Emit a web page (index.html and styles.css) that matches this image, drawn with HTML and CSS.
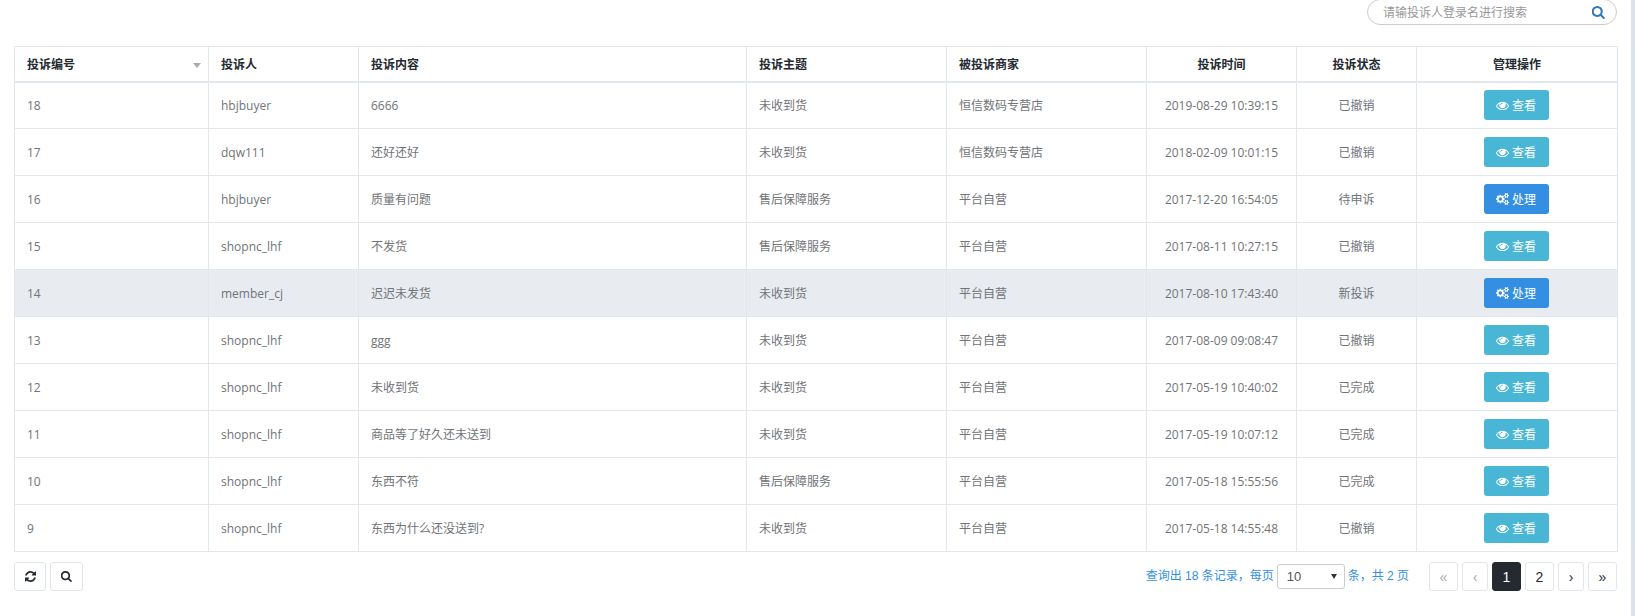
FILE: index.html
```html
<!DOCTYPE html>
<html lang="zh-CN">
<head>
<meta charset="utf-8">
<title>投诉管理</title>
<link rel="stylesheet" href="styles.css">
</head>
<body>
<svg class="defs" width="0" height="0" aria-hidden="true">
  <symbol id="i-eye" viewBox="0 300 1792 1192"><path fill="currentColor" d="M1664 960q-152-236-381-353 61 104 61 225 0 185-131.500 316.500t-316.500 131.500-316.500-131.500-131.500-316.500q0-121 61-225-229 117-381 353 133 205 333.500 326.500t434.500 121.500 434.500-121.500 333.500-326.500zm-720-384q0-20-14-34t-34-14q-125 0-214.500 89.500t-89.500 214.500q0 20 14 34t34 14 34-14 14-34q0-86 61-147t147-61q20 0 34-14t14-34zm848 384q0 34-20 69-140 230-376.500 368.500t-499.500 138.500-499.500-139-376.500-368q-20-35-20-69t20-69q140-229 376.500-368t499.500-139 499.500 139 376.500 368q20 35 20 69z"/></symbol>
  <symbol id="i-cogs" viewBox="0 0 1920 1792"><path fill="currentColor" d="M896 896q0-106-75-181t-181-75-181 75-75 181 75 181 181 75 181-75 75-181zm768 512q0-52-38-90t-90-38-90 38-38 90q0 53 37.500 90.500t90.500 37.500 90.500-37.500 37.500-90.500zm0-1024q0-52-38-90t-90-38-90 38-38 90q0 53 37.500 90.500t90.500 37.500 90.500-37.500 37.500-90.500zm-384 421v185q0 10-7 19.500t-16 10.500l-155 24q-11 35-32 76 34 48 90 115 7 11 7 20 0 12-7 19-23 30-82.500 89.500t-78.500 59.500q-11 0-21-7l-115-90q-37 19-77 31-11 108-23 155-7 24-30 24h-186q-11 0-20-7.500t-10-17.500l-23-153q-34-10-75-31l-118 89q-7 7-20 7-11 0-21-8-144-133-144-160 0-9 7-19 10-14 41-53t47-61q-23-44-35-82l-152-24q-10-1-17-9.500t-7-19.500v-185q0-10 7-19.500t16-10.500l155-24q11-35 32-76-34-48-90-115-7-11-7-20 0-12 7-20 22-30 82-89t79-59q11 0 21 7l115 90q34-18 77-32 11-108 23-154 7-24 30-24h186q11 0 20 7.500t10 17.500l23 153q34 10 75 31l118-89q8-7 20-7 11 0 21 8 144 133 144 160 0 8-7 19-12 16-42 54t-45 60q23 48 34 82l152 23q10 2 17 10.500t7 19.500zm640 533v140q0 16-149 31-12 27-30 52 51 113 51 138 0 4-4 7-122 71-124 71-8 0-46-47t-52-68q-20 2-30 2t-30-2q-14 21-52 68t-46 47q-2 0-124-71-4-3-4-7 0-25 51-138-18-25-30-52-149-15-149-31v-140q0-16 149-31 13-29 30-52-51-113-51-138 0-4 4-7 4-2 35-20t59-34 30-16q8 0 46 46.500t52 67.500q20-2 30-2t30 2q51-71 92-112l6-2q4 0 124 70 4 3 4 7 0 25-51 138 17 23 30 52 149 15 149 31zm0-1024v140q0 16-149 31-12 27-30 52 51 113 51 138 0 4-4 7-122 71-124 71-8 0-46-47t-52-68q-20 2-30 2t-30-2q-14 21-52 68t-46 47q-2 0-124-71-4-3-4-7 0-25 51-138-18-25-30-52-149-15-149-31v-140q0-16 149-31 13-29 30-52-51-113-51-138 0-4 4-7 4-2 35-20t59-34 30-16q8 0 46 46.500t52 67.500q20-2 30-2t30 2q51-71 92-112l6-2q4 0 124 70 4 3 4 7 0 25-51 138 17 23 30 52 149 15 149 31z"/></symbol>
  <symbol id="i-search" viewBox="128 128 1600 1664"><path fill="currentColor" d="M1216 832q0-185-131.500-316.500t-316.500-131.500-316.500 131.500-131.500 316.500 131.500 316.500 316.500 131.500 316.500-131.500 131.500-316.500zm512 832q0 52-38 90t-90 38q-54 0-90-38l-343-342q-179 124-399 124-143 0-273.500-55.500t-225-150-150-225-55.500-273.500 55.500-273.500 150-225 225-150 273.500-55.500 273.500 55.500 225 150 150 225 55.500 273.500q0 220-124 399l343 343q37 37 37 90z"/></symbol>
  <symbol id="i-refresh" viewBox="128 128 1536 1536"><path fill="currentColor" d="M1639 1056q0 5-1 7-64 268-268 434.500t-478 166.500q-146 0-282.500-55t-243.500-157l-129 129q-19 19-45 19t-45-19-19-45v-448q0-26 19-45t45-19h448q26 0 45 19t19 45-19 45l-137 137q71 66 161 102t187 36q134 0 250-65t186-179q11-17 53-117 8-23 30-23h192q13 0 22.500 9.500t9.500 22.500zm25-800v448q0 26-19 45t-45 19h-448q-26 0-45-19t-19-45 19-45l138-138q-148-137-349-137-134 0-250 65t-186 179q-11 17-53 117-8 23-30 23h-199q-13 0-22.500-9.500t-9.500-22.500v-7q65-268 270-434.500t480-166.500q146 0 284 55.500t245 156.500l130-129q19-19 45-19t45 19 19 45z"/></symbol>
</svg>
<main class="page">
  <div class="toolbar">
    <div class="search">
      <span class="search-hint">请输投诉人登录名进行搜索</span>
      <svg class="search-icon"><use href="#i-search"/></svg>
    </div>
  </div>
  <table class="grid">
    <colgroup>
      <col class="c1"><col class="c2"><col class="c3"><col class="c4"><col class="c5"><col class="c6"><col class="c7"><col class="c8">
    </colgroup>
    <thead>
      <tr>
        <th class="sortable">投诉编号<span class="caret"></span></th>
        <th>投诉人</th>
        <th>投诉内容</th>
        <th>投诉主题</th>
        <th>被投诉商家</th>
        <th class="mid">投诉时间</th>
        <th class="mid">投诉状态</th>
        <th class="mid">管理操作</th>
      </tr>
    </thead>
    <tbody>
      <tr><td>18</td><td>hbjbuyer</td><td>6666</td><td>未收到货</td><td>恒信数码专营店</td><td class="mid">2019-08-29 10:39:15</td><td class="mid">已撤销</td><td class="mid"><a class="btn info"><svg class="eye"><use href="#i-eye"/></svg>查看</a></td></tr>
      <tr><td>17</td><td>dqw111</td><td>还好还好</td><td>未收到货</td><td>恒信数码专营店</td><td class="mid">2018-02-09 10:01:15</td><td class="mid">已撤销</td><td class="mid"><a class="btn info"><svg class="eye"><use href="#i-eye"/></svg>查看</a></td></tr>
      <tr><td>16</td><td>hbjbuyer</td><td>质量有问题</td><td>售后保障服务</td><td>平台自营</td><td class="mid">2017-12-20 16:54:05</td><td class="mid">待申诉</td><td class="mid"><a class="btn primary"><svg class="cogs"><use href="#i-cogs"/></svg>处理</a></td></tr>
      <tr><td>15</td><td>shopnc_lhf</td><td>不发货</td><td>售后保障服务</td><td>平台自营</td><td class="mid">2017-08-11 10:27:15</td><td class="mid">已撤销</td><td class="mid"><a class="btn info"><svg class="eye"><use href="#i-eye"/></svg>查看</a></td></tr>
      <tr class="hover"><td>14</td><td>member_cj</td><td>迟迟未发货</td><td>未收到货</td><td>平台自营</td><td class="mid">2017-08-10 17:43:40</td><td class="mid">新投诉</td><td class="mid"><a class="btn primary"><svg class="cogs"><use href="#i-cogs"/></svg>处理</a></td></tr>
      <tr><td>13</td><td>shopnc_lhf</td><td>ggg</td><td>未收到货</td><td>平台自营</td><td class="mid">2017-08-09 09:08:47</td><td class="mid">已撤销</td><td class="mid"><a class="btn info"><svg class="eye"><use href="#i-eye"/></svg>查看</a></td></tr>
      <tr><td>12</td><td>shopnc_lhf</td><td>未收到货</td><td>未收到货</td><td>平台自营</td><td class="mid">2017-05-19 10:40:02</td><td class="mid">已完成</td><td class="mid"><a class="btn info"><svg class="eye"><use href="#i-eye"/></svg>查看</a></td></tr>
      <tr><td>11</td><td>shopnc_lhf</td><td>商品等了好久还未送到</td><td>未收到货</td><td>平台自营</td><td class="mid">2017-05-19 10:07:12</td><td class="mid">已完成</td><td class="mid"><a class="btn info"><svg class="eye"><use href="#i-eye"/></svg>查看</a></td></tr>
      <tr><td>10</td><td>shopnc_lhf</td><td>东西不符</td><td>售后保障服务</td><td>平台自营</td><td class="mid">2017-05-18 15:55:56</td><td class="mid">已完成</td><td class="mid"><a class="btn info"><svg class="eye"><use href="#i-eye"/></svg>查看</a></td></tr>
      <tr><td>9</td><td>shopnc_lhf</td><td>东西为什么还没送到?</td><td>未收到货</td><td>平台自营</td><td class="mid">2017-05-18 14:55:48</td><td class="mid">已撤销</td><td class="mid"><a class="btn info"><svg class="eye"><use href="#i-eye"/></svg>查看</a></td></tr>
    </tbody>
  </table>
  <div class="footer">
    <div class="tools">
      <a class="tool refresh"><svg><use href="#i-refresh"/></svg></a>
      <a class="tool find"><svg><use href="#i-search"/></svg></a>
    </div>
    <div class="paging">
      <span class="info-text">查询出 18 条记录，每页</span>
      <span class="select">10<span class="select-arrow"></span></span>
      <span class="info-text">条，共 2 页</span>
      <nav class="pager">
        <a class="pg wide off">«</a>
        <a class="pg off">‹</a>
        <a class="pg wide current">1</a>
        <a class="pg wide">2</a>
        <a class="pg">›</a>
        <a class="pg wide">»</a>
      </nav>
    </div>
  </div>
</main>
</body>
</html>
```
FILE: styles.css
```css
* { box-sizing: border-box; }
html, body { margin: 0; height: 100%; }
body {
  background: #fff;
  font-family: "Open Sans", "Noto Sans CJK SC", sans-serif;
  font-size: 12px;
  color: #707478;
  overflow: hidden;
}
.defs { position: absolute; }
.page { width: 1635px; height: 616px; padding: 0 14px; border-right: 4px solid #dbe2ea; }
.toolbar { height: 46px; display: flex; justify-content: flex-end; }
.search {
  width: 250px; height: 26px; margin-top: -1px;
  border: 1px solid #ccc; border-radius: 14px;
  display: flex; align-items: center; justify-content: space-between;
  padding: 0 11px 0 15px; color: #999; font-size: 12px;
}
.search-icon { width: 13px; height: 13px; color: #337ab7; }
.grid { width: 1603px; border-collapse: collapse; table-layout: fixed; }
.c1 { width: 194px; } .c2 { width: 150px; } .c3 { width: 388px; } .c4 { width: 200px; }
.c5 { width: 200px; } .c6 { width: 150px; } .c7 { width: 120px; } .c8 { width: 201px; }
th, td { border: 1px solid #e2e7eb; padding: 0 12px; text-align: left; }
th { height: 35px; color: #242a30; font-weight: 600; border-bottom-width: 2px; position: relative; }
td { height: 47px; }
.mid { text-align: center; }
.hover td { background: #e8ebf0; }
.caret {
  position: absolute; right: 7px; top: 16px;
  border: 4px solid transparent; border-top: 5px solid #aaa; border-bottom: 0;
}
.btn {
  display: inline-flex; align-items: center; justify-content: center;
  width: 65px; height: 30px; margin-right: 2px; border-radius: 3px; color: #fff; vertical-align: middle; gap: 3px;
}
.info { background: #49b6d6; }
.primary { background: #348fe2; }
.eye { width: 13px; height: 9px; }
.cogs { width: 13px; height: 12px; }
.footer { display: flex; justify-content: space-between; align-items: flex-start; margin-top: 10px; }
.tools { display: flex; gap: 4px; }
.tool {
  height: 29px; border: 1px solid #e2e7eb; border-radius: 3px;
  display: flex; align-items: center; justify-content: center; color: #242a30;
}
.tool svg { width: 11px; height: 11px; }
.refresh { width: 32px; }
.find { width: 33px; }
.paging { display: flex; align-items: flex-start; }
.info-text { color: #348fe2; font-family: "Liberation Sans", "Noto Sans CJK SC", sans-serif; font-size: 12px; line-height: 29px; }
.select {
  width: 68px; height: 25px; margin: 2px 3px 0 3px; padding-left: 9px;
  border: 1px solid #ccc; border-radius: 3px; position: relative;
  font-family: "Liberation Sans", sans-serif; line-height: 23px; font-size: 13px; color: #555;
}
.select-arrow {
  position: absolute; right: 7px; top: 9px;
  border: 3px solid transparent; border-top: 5px solid #333; border-bottom: 0;
}
.pager { display: flex; gap: 4px; margin-left: 20px; }
.pg {
  width: 26px; height: 29px; border: 1px solid #e2e7eb; border-radius: 3px;
  display: flex; align-items: center; justify-content: center; color: #242a30;
  font-family: "Liberation Sans", sans-serif; font-size: 14px;
}
.wide { width: 29px; }
.off { color: #aaa; }
.current { background: #242a30; border-color: #242a30; color: #fff; }
```
